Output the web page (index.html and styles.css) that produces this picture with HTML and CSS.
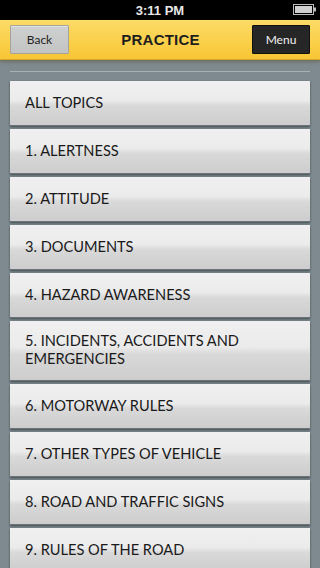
FILE: index.html
```html
<!DOCTYPE html>
<html>
<head>
<meta charset="utf-8">
<link rel="stylesheet" href="styles.css">
</head>
<body>
<div class="status">
  <span class="time">3:11 PM</span>
  <svg class="battery" width="24" height="11" viewBox="0 0 24 11">
    <rect x="0.5" y="0.5" width="20" height="10" fill="none" stroke="#bdbdbd" stroke-width="1"/>
    <rect x="2" y="2" width="17" height="7" fill="#cfcfcf"/>
    <rect x="21" y="3.5" width="2" height="4" fill="#bdbdbd"/>
  </svg>
</div>
<header class="header">
  <button class="btn back">Back</button>
  <h1 class="title">PRACTICE</h1>
  <button class="btn menu">Menu</button>
</header>
<main class="content">
  <div class="divider"></div>
  <ul class="list">
    <li class="item">ALL TOPICS</li>
    <li class="item">1. ALERTNESS</li>
    <li class="item">2. ATTITUDE</li>
    <li class="item">3. DOCUMENTS</li>
    <li class="item">4. HAZARD AWARENESS</li>
    <li class="item tall">5. INCIDENTS, ACCIDENTS AND<br>EMERGENCIES</li>
    <li class="item">6. MOTORWAY RULES</li>
    <li class="item">7. OTHER TYPES OF VEHICLE</li>
    <li class="item">8. ROAD AND TRAFFIC SIGNS</li>
    <li class="item">9. RULES OF THE ROAD</li>
  </ul>
</main>
</body>
</html>
```
FILE: styles.css
```css
html, body {
  margin: 0;
  padding: 0;
  width: 320px;
  height: 568px;
  overflow: hidden;
  background: #7e8a8f;
  font-family: Lato, "Liberation Sans", sans-serif;
}
.status {
  height: 20px;
  background: #000;
  color: #fff;
  display: flex;
  align-items: center;
  justify-content: center;
  position: relative;
}
.time {
  font-family: "Liberation Sans", Arial, sans-serif;
  font-weight: bold;
  font-size: 13px;
  color: #e8e8e8;
}
.battery {
  position: absolute;
  right: 3px;
  top: 4px;
}
.header {
  height: 39px;
  background: linear-gradient(#fcdb68 0%, #fbd250 45%, #f8c634 100%);
  display: flex;
  align-items: center;
  justify-content: space-between;
  padding: 0 10px;
  border-bottom: 1px solid #d6a52a;
  box-shadow: 0 2px 3px rgba(90, 80, 40, 0.45);
  position: relative;
  z-index: 1;
}
.btn {
  height: 29px;
  font-family: Lato, "Liberation Sans", sans-serif;
  font-size: 12px;
  border-radius: 1px;
  padding: 0;
}
.back {
  width: 59px;
  background: linear-gradient(#cfd0d0, #c2c3c3);
  border: 1px solid #a4a49a;
  color: #222;
  box-shadow: inset 0 1px 0 rgba(255,255,255,0.4);
}
.menu {
  width: 58px;
  background: #262626;
  border: 1px solid #111;
  color: #f2f2f2;
}
.title {
  margin: 0;
  font-family: "Liberation Sans", Arial, sans-serif;
  font-weight: bold;
  font-size: 15px;
  color: #1e1e1e;
  letter-spacing: 0.2px;
}
.content {
  padding: 11px 10px 0;
}
.divider {
  height: 1px;
  background: #a7b1b4;
  margin: 0 0 9px;
}
.list {
  list-style: none;
  margin: 0;
  padding: 0;
  display: flex;
  flex-direction: column;
  gap: 3px;
}
.item {
  height: 45px;
  box-sizing: border-box;
  display: flex;
  align-items: center;
  padding: 0 15px 1px;
  font-size: 14.6px;
  color: #1a1a1a;
  line-height: 18px;
  background: linear-gradient(#f0f0f0 0%, #ebebeb 44%, #d9d9d9 56%, #d2d2d2 80%, #cdcdcd 100%);
  box-shadow: 0 1px 2px rgba(40, 50, 55, 0.7);
  border-bottom: 1px solid #6a7478;
}
.item.tall {
  height: 60px;
}
```
